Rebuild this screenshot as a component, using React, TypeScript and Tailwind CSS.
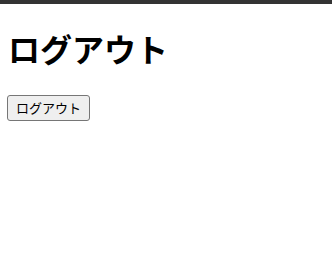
export default function App() {
  return (
    <div className="min-h-screen bg-white" style={{ fontFamily: '"Noto Sans CJK JP", sans-serif' }}>
      <div className="h-[4px] bg-[#333333]" />
      <div className="px-2 pt-[20px]">
        <h1 className="text-[32px] font-bold leading-[48px] text-black">ログアウト</h1>
        <div className="pt-[22px]">
          <button className="-ml-px h-[26px] w-[83px] rounded-[3px] border border-[#767676] bg-[#efefef] px-[6px] text-[13px] text-black">
            ログアウト
          </button>
        </div>
      </div>
    </div>
  );
}
